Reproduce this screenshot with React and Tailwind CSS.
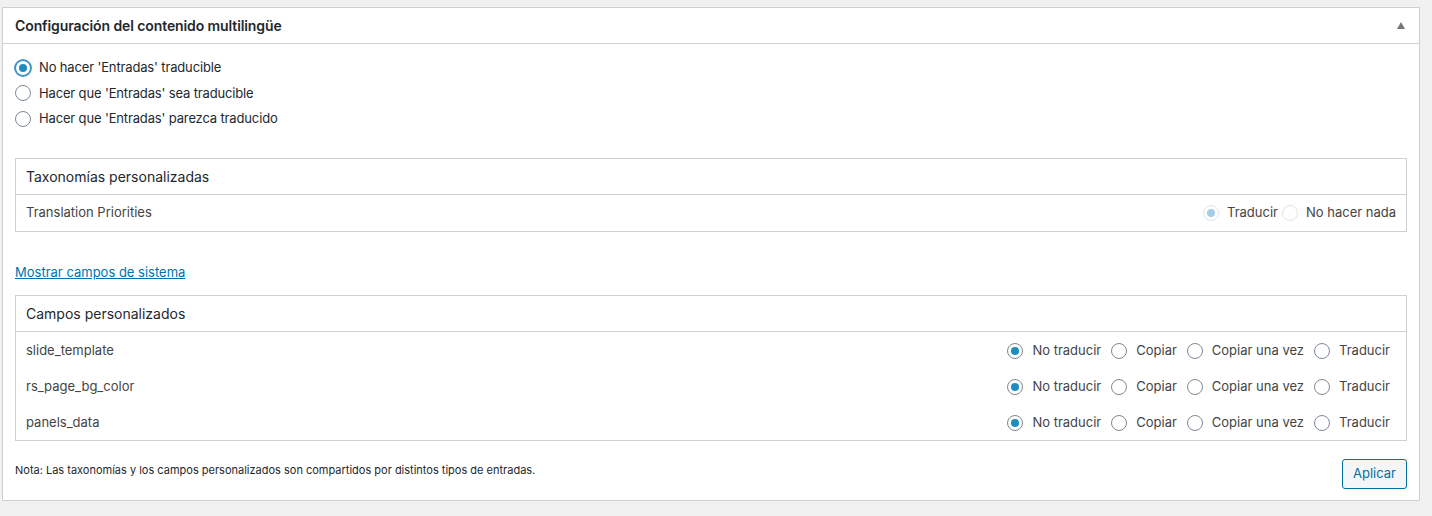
import { useState } from 'react';

const font = { fontFamily: 'Inter, "Noto Sans", sans-serif' };

function Radio({ checked, disabled, focus }) {
  if (disabled) {
    return (
      <span className="w-4 h-4 rounded-full border border-[#e2e4e7] bg-white flex items-center justify-center shrink-0">
        {checked && <span className="w-2 h-2 rounded-full bg-[#a5cde4]" />}
      </span>
    );
  }
  return (
    <span
      className={`w-4 h-4 rounded-full border bg-white flex items-center justify-center shrink-0 ${
        focus ? 'border-[#1e8cbe] shadow-[0_0_0_1px_#5b9dd9]' : 'border-[#7e8993]'
      }`}
    >
      {checked && <span className="w-2 h-2 rounded-full bg-[#1e8cbe]" />}
    </span>
  );
}

export default function App() {
  const [mode, setMode] = useState(0);
  const fields = ['slide_template', 'rs_page_bg_color', 'panels_data'];
  const opts = ['No traducir', 'Copiar', 'Copiar una vez', 'Traducir'];

  return (
    <div className="min-h-[516px] bg-[#f1f1f1] pt-[7px] pl-[2px] pr-[12px]" style={font}>
      <div className="bg-white border border-[#ccd0d4] text-[#23282d]">
        {/* Header */}
        <div className="h-[36px] border-b border-[#ccd0d4] flex items-center justify-between pl-3 pr-[14px]">
          <h2 className="text-[14px] font-semibold tracking-[-0.1px]">Configuración del contenido multilingüe</h2>
          <span className="w-0 h-0 border-l-[4px] border-r-[4px] border-b-[7px] border-l-transparent border-r-transparent border-b-[#72777c]" />
        </div>

        <div className="px-3 pt-[11px] pb-[11px]">
          {/* Mode */}
          <div className="flex flex-col text-[13px] tracking-[-0.15px]">
            {[
              "No hacer 'Entradas' traducible",
              "Hacer que 'Entradas' sea traducible",
              "Hacer que 'Entradas' parezca traducido",
            ].map((label, i) => (
              <label key={i} className="h-[25.5px] flex items-center gap-2 cursor-pointer" onClick={() => setMode(i)}>
                <Radio checked={mode === i} focus={mode === i} />
                <span>{label}</span>
              </label>
            ))}
          </div>

          {/* Taxonomías */}
          <div className="mt-[26px] border border-[#ccd0d4]">
            <div className="h-[36px] border-b border-[#ccd0d4] flex items-center px-[10px] pt-px text-[14px]">
              Taxonomías personalizadas
            </div>
            <div className="h-[36px] flex items-center justify-between pl-[10px] pr-[10px] pt-px text-[13px] text-[#444]">
              <span>Translation Priorities</span>
              <div className="flex items-center">
                <Radio checked disabled />
                <span className="ml-2">Traducir</span>
                <span className="ml-[4px]"><Radio disabled /></span>
                <span className="ml-2">No hacer nada</span>
              </div>
            </div>
          </div>

          {/* Link */}
          <div className="mt-[31px] h-5 flex items-center">
            <a href="#" className="text-[13px] text-[#0073aa] underline">Mostrar campos de sistema</a>
          </div>

          {/* Campos */}
          <div className="mt-[12px] border border-[#ccd0d4]">
            <div className="h-[36px] border-b border-[#ccd0d4] flex items-center px-[10px] pt-px text-[14px]">
              Campos personalizados
            </div>
            {fields.map((f) => (
              <div key={f} className="h-[36px] flex items-center justify-between pl-[10px] pr-4 pt-[2px] text-[13px] text-[#444]">
                <span>{f}</span>
                <div className="flex items-center gap-[10px]">
                  {opts.map((o, j) => (
                    <label key={o} className="flex items-center gap-[9px]">
                      <Radio checked={j === 0} />
                      <span>{o}</span>
                    </label>
                  ))}
                </div>
              </div>
            ))}
          </div>

          {/* Footer */}
          <div className="flex items-start justify-between mt-[18px]">
            <p className="text-[11px] text-[#23282d] mt-[3px]">
              Nota: Las taxonomías y los campos personalizados son compartidos por distintos tipos de entradas.
            </p>
            <button className="h-[30px] px-[10px] rounded-[3px] border border-[#0071a1] bg-[#f3f5f6] text-[#0071a1] text-[13px]">
              Aplicar
            </button>
          </div>
        </div>
      </div>
    </div>
  );
}
